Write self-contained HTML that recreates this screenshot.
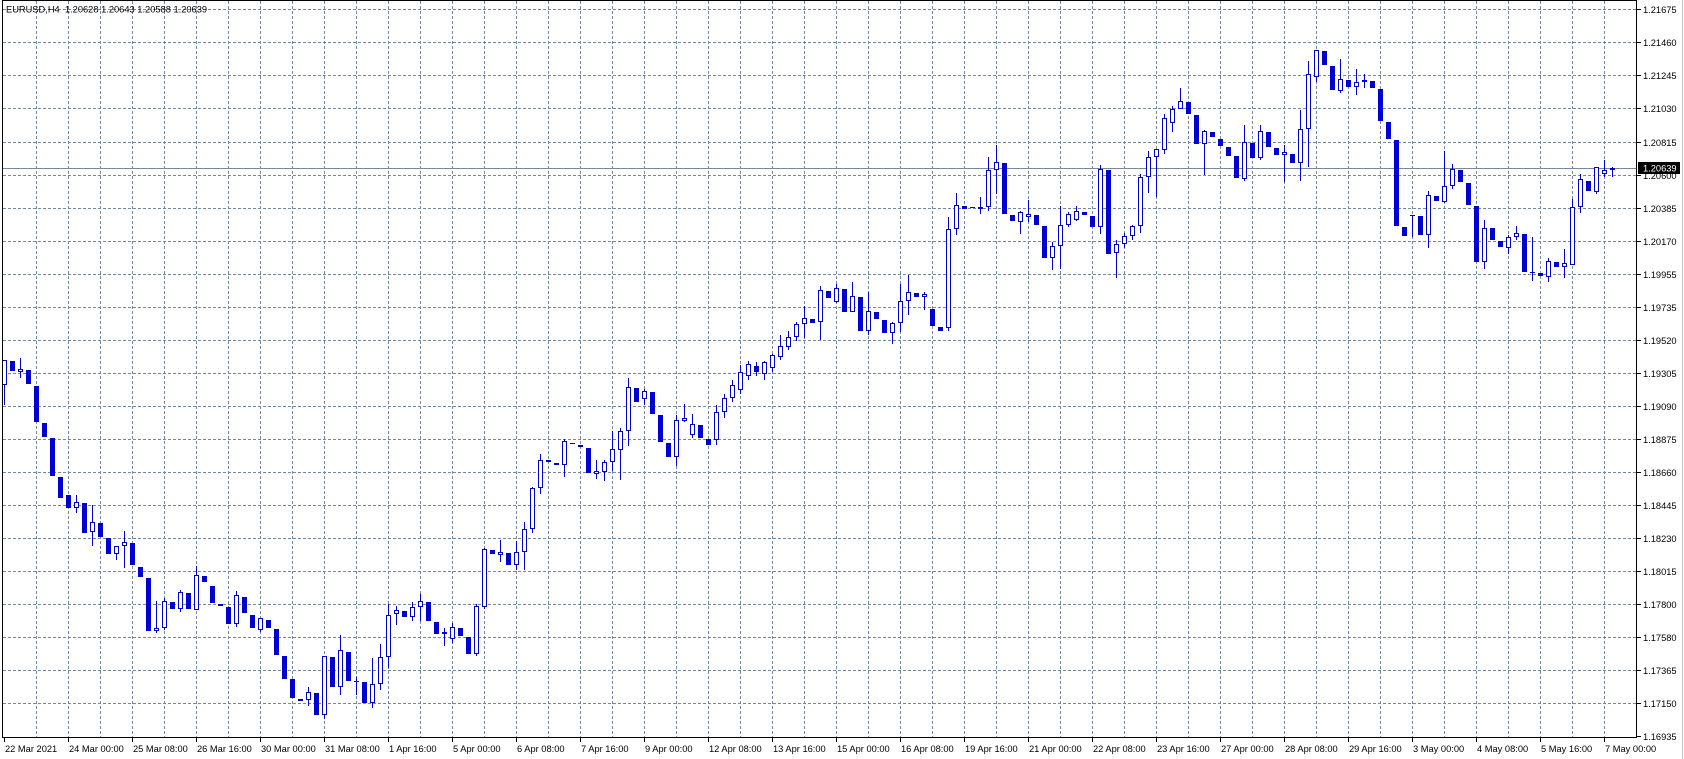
<!DOCTYPE html>
<html><head><meta charset="utf-8">
<style>
html,body{margin:0;padding:0;background:#fff;width:1684px;height:759px;overflow:hidden}
svg{display:block}
text{font-family:"Liberation Sans",sans-serif;font-size:9.3px;fill:#000;white-space:pre}
</style></head>
<body>
<svg id="s" width="1684" height="759" xmlns="http://www.w3.org/2000/svg">
<rect x="0" y="0" width="1684" height="759" fill="#fff"/>
<line x1="1682.5" y1="0" x2="1682.5" y2="759" stroke="#c8c8c8"/>
<g id="grid"></g>
<line x1="3" y1="168.5" x2="1637" y2="168.5" stroke="#778899" stroke-width="1"/>
<g id="c"></g>
<line x1="2.5" y1="0" x2="2.5" y2="737" stroke="#000"/>
<line x1="2" y1="0.5" x2="1637" y2="0.5" stroke="#000"/>
<line x1="1636.5" y1="0" x2="1636.5" y2="738" stroke="#000"/>
<line x1="2" y1="737.5" x2="1637" y2="737.5" stroke="#000"/>
<g id="ax"></g>
<text x="6" y="12.5" xml:space="preserve">EURUSD,H4  1.20628 1.20643 1.20588 1.20639</text>
<rect x="1638" y="162" width="42" height="12" fill="#000"/>
<text x="1643" y="171.5" style="fill:#fff">1.20639</text>
</svg>
<script>
var NS="http://www.w3.org/2000/svg";
function el(p,t,a,txt){var e=document.createElementNS(NS,t);for(var k in a)e.setAttribute(k,a[k]);if(txt)e.textContent=txt;p.appendChild(e);return e;}
var g=document.getElementById('grid'),ax=document.getElementById('ax'),c=document.getElementById('c');
var prices=["1.21675","1.21460","1.21245","1.21030","1.20815","1.20600","1.20385","1.20170","1.19955","1.19735","1.19520","1.19305","1.19090","1.18875","1.18660","1.18445","1.18230","1.18015","1.17800","1.17580","1.17365","1.17150","1.16935"];
for(var k=0;k<23;k++){var y=Math.round(9.3+33.05*k)+0.5;
 if(k<22) el(g,'line',{x1:3,y1:y,x2:1636,y2:y,stroke:'#778899','stroke-dasharray':'3,2'});
 el(ax,'line',{x1:1637,y1:y,x2:1641,y2:y,stroke:'#000'});
 el(ax,'text',{x:1643,y:y+3.5},prices[k]);
}
for(var x=36;x<1636;x+=32){el(g,'line',{x1:x+0.5,y1:1,x2:x+0.5,y2:737,stroke:'#778899','stroke-dasharray':'3,2'});}
var dates=["22 Mar 2021","24 Mar 00:00","25 Mar 08:00","26 Mar 16:00","30 Mar 00:00","31 Mar 08:00","1 Apr 16:00","5 Apr 00:00","6 Apr 08:00","7 Apr 16:00","9 Apr 00:00","12 Apr 08:00","13 Apr 16:00","15 Apr 00:00","16 Apr 08:00","19 Apr 16:00","21 Apr 00:00","22 Apr 08:00","23 Apr 16:00","27 Apr 00:00","28 Apr 08:00","29 Apr 16:00","3 May 00:00","4 May 08:00","5 May 16:00","7 May 00:00"];
for(var i=0;i<dates.length;i++){var x=4+64*i;el(ax,'line',{x1:x+0.5,y1:738,x2:x+0.5,y2:742,stroke:'#000'});el(ax,'text',{x:x+1,y:752},dates[i]);}
var D=[
['u',360,385,360,405],['d',361,371],['u',369.3,372.3,358,377.7],['d',370,383.7],['d',386,421.7],['d',423,437],['d',438.3,475.7],['d',477,497.7],['d',495,507.7],['u',502.3,508.3,495,512.7],
['d',503,532.7],['u',522.3,532.3,505,545.7],['d',523,536.7],['d',538,553.7],['u',546.3,554.3,546,559.7],['u',542.3,546.3,531,567.7],['d',543,564.7],['d',567,577],['d',578,631],['u',628,631,601,633],
['u',601.3,627.7,597.7,630],['d',602,608.7],['u',592.3,609.3,590,611.7],['d',593.3,609.3],['u',575.3,610.3,565.7,610.3],['d',576.3,582.3],['d',586,602.7],['d',604,605.7],['d',607,623.7],['u',595.3,624.3,591,626.7],
['d',597,612.7],['d',615,627.7],['u',618,629.7,618,631.7],['d',620,627.7],['d',629,654.7],['d',656,678.7],['d',679,697.7],['d',699,700.7],['u',692,700.3,687,705.7],['d',693,714.7],
['u',656,715.3,656,719.3],['d',657,686.7],['u',650.3,687.3,635,694.7],['d',652,680.7],['x',681,682,677,695],['d',682,703],['u',684,703.3,658,707.7],['u',657,684.3,644,690],['u',615.3,657.3,604,668],['u',610.3,614.3,606,624.7],
['d',611,616.7],['u',607.3,617.3,602,620.7],['u',601.3,607.3,594,620.7],['d',602,620.7],['d',622,633.7],['u',632.3,634.3,628,645.7],['u',627.3,639.3,623.3,643.3],['d',628,636],['d',637,653.7],['u',606.3,654.3,604,656],
['u',549.3,607,547.7,609],['d',550,554],['u',552.3,555.3,540,561.7],['d',553,564.7],['u',552.3,565.3,541,570],['u',529.3,552.3,522,570],['u',488.3,529.3,486.7,533.3],['u',460.3,488.3,454,493.7],['d',460.3,462],['d',463,464.7],
['u',441.3,465.3,439,476.7],['d',443,444],['d',445,446.7],['d',448,472.7],['u',471.3,474.3,460,479],['u',462.3,472,460,481],['u',449.3,462.3,431,471],['u',431.3,449.7,428,480],['u',387.3,431.3,378,445.7],['d',388,401.7],
['u',391.3,399.3,389,405],['d',392,413.7],['d',415,441.7],['d',443,457],['u',420.3,457.3,415,465.7],['u',418.3,420.7,404,421.7],['u',424.3,435.3,414,437.7],['d',425,437.7],['d',439,444.7],['u',412,440,405,445],
['u',398,412,394,418],['u',385,398,380,402],['u',372,390,365,394],['u',364,376,361,380],['d',366,372,362,376],['u',362,374,361,380],['u',355,368,354,372],['u',346,357,335,360],['u',337.3,347.3,331,350],['u',324.3,337.3,322,341],
['u',318.3,324.3,306.3,338.3],['d',319.3,322.7],['u',290.3,322.3,286,339.7],['d',291.3,297.7],['u',288.3,302.3,283.7,303.3],['d',289,311.7],['u',296.3,312.3,282,312.3],['d',297,330.7],['u',311.3,331.3,292,334.7],['d',312,318.7],
['d',320,332.7],['u',323.3,333.3,321.7,343.7],['u',301.3,323.3,283.7,332],['u',292.3,301.3,275,314.7],['d',293,296.7],['u',294,297.3,291.7,309.7],['d',309,325.7],['d',327,330.7],['u',229.3,328,217,331],['u',205.3,229.3,193.3,234.7],
['d',206,208.7],['x',207,208,207,208],['u',207.3,209.3,197,213.7],['u',170,207.3,157,210.7],['u',162.3,170.3,145,194],['d',163,213.7],['d',215,220.7],['u',212.3,221.7,211,233.7],['u',214.3,217.3,199.7,222],['d',215,224.7],
['d',226,257.7],['u',246.3,258.3,242,269.7],['u',225.3,246.3,206,268.7],['u',214.3,225.3,212.3,226.7],['u',211.3,219.7,206,220.7],['d',212,214.7],['d',216,226.7],['u',169.3,227.3,165,233.7],['d',170,253.7],['u',244,253.3,240,277.7],
['u',236.3,244.3,233.3,247.7],['u',226,236.3,225,240],['u',177.3,226.3,174.3,232.7],['u',157.3,177.3,150.7,193],['u',149.3,157.3,148.7,196.7],['u',118.3,150.3,114,153.7],['u',109.3,123.3,106,131.7],['u',101.3,109.3,88,109.3],['d',102,113.7],['d',115,143.7],
['u',131,144.3,130,174.7],['d',132,136.7],['d',139,145.7],['d',147,155.7],['d',156,177.7],['u',142.3,178.7,125.3,180.7],['d',143,157.7],['u',131.3,158.3,125.3,159.7],['d',132,146.7],['d',148,154.7],
['u',152.3,155.3,145.3,182.3],['d',154,162.7],['u',129.3,163.3,110,180.7],['u',74.3,129.3,61,166.7],['u',50.3,77.3,50.3,81.7],['d',51,64.7],['d',66,90],['u',79.3,90.7,59,92.7],['d',80.3,86.7],['u',82.3,87.3,69,95],
['u',80.3,82.3,73.7,88],['d',81,87.7],['d',89,120.7],['d',122,138.7],['d',140,225.7],['d',227,235.7],['x',215,216.7,215,237.3],['d',216,234.7],['u',195.3,235.3,191,247.7],['d',196,201],
['u',186.3,201.7,151,202.7],['u',169.3,186.3,164,188.7],['d',170,181.7],['d',183,205],['d',206,261.7],['u',228.3,262.3,220,268.7],['d',228,239.7],['d',241,246.7],['u',237.3,248.3,235,254],['u',233.3,237.3,226.3,239.7],
['d',234,272],['x',272,273,237,280.7],['d',273,275.7],['u',261.3,277.3,258,281.7],['d',262,266.7],['u',263.3,267.3,249,277.7],['u',207.3,264.7,199,264.7],['u',179.3,206.7,174.3,212.7],['d',181,190.7],['u',167.3,191.7,167.3,193.7],
['u',170.3,174.3,160,177],['u',168.3,170.3,167,177]
];
var B='#0000d2';
for(var i=0;i<D.length;i++){
 var d=D[i],cx=4+8*i,t=Math.round(d[1]),b=Math.round(d[2]);if(b<=t)b=t+1;
 var hi=d.length>3?Math.round(d[3]):t,lo=d.length>3?Math.round(d[4]):b;
 if(hi<lo) el(c,'rect',{x:cx,y:hi,width:1,height:lo-hi,fill:B});
 if(d[0]=='x'){el(c,'rect',{x:cx-2,y:t,width:5,height:1,fill:B});continue;}
 el(c,'rect',{x:cx-2,y:t,width:5,height:b-t,fill:B});
 if(d[0]=='u'&&b-t>2) el(c,'rect',{x:cx-1,y:t+1,width:3,height:b-t-2,fill:'#fff'});
}
// move price box on top of axis labels
var s=document.getElementById('s');var rs=s.querySelectorAll('rect');var box=rs[rs.length-1];
</script>
<script>
(function(){var s=document.getElementById('s');var NS="http://www.w3.org/2000/svg";
var r=document.createElementNS(NS,'rect');r.setAttribute('x',1638);r.setAttribute('y',162);r.setAttribute('width',42);r.setAttribute('height',12);r.setAttribute('fill','#000');s.appendChild(r);
var t=document.createElementNS(NS,'text');t.setAttribute('x',1643);t.setAttribute('y',171.5);t.setAttribute('style','fill:#fff');t.textContent='1.20639';s.appendChild(t);})();
</script>
</body></html>
